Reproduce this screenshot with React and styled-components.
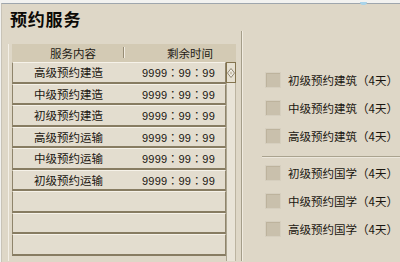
import React from 'react';
import styled, { createGlobalStyle } from 'styled-components';

const GlobalStyle = createGlobalStyle`
  html, body {
    margin: 0;
    padding: 0;
    background: #f2f2f0;
  }
  body {
    width: 400px;
    height: 262px;
    overflow: hidden;
    font-family: "Noto Sans CJK SC", "Liberation Sans", sans-serif;
    color: #1e1b16;
  }
`;

const Window = styled.div`
  position: relative;
  margin: 3px 0 0 1px;
  height: 259px;
  box-sizing: border-box;
  background: #ded7c7;
  border-top: 1px solid #9ea6ad;
  border-left: 1px solid #c8c3b7;
  display: flex;
  flex-direction: column;
`;

const TopGlint = styled.div`
  position: absolute;
  top: -2px;
  left: 358px;
  width: 7px;
  height: 3px;
  border-radius: 0 0 3px 3px;
  background: #a9d4ea;
`;

const Title = styled.h1`
  margin: 5px 0 0 8px;
  font-size: 17px;
  line-height: 20px;
  font-weight: 700;
  color: #0c0a06;
  letter-spacing: 0.8px;
`;

const Body = styled.div`
  flex: 1;
  margin-top: 2px;
  display: flex;
`;

const ListFrame = styled.section`
  margin: 13px 0 1px 6px;
  padding-left: 3px;
  border-left: 1px solid #f3efe6;
  width: 224px;
  display: flex;
  flex-direction: column;
`;

const Header = styled.div`
  height: 18px;
  background: #d3cab4;
  display: grid;
  grid-template-columns: 112px 1fr;
  font-size: 11.5px;
  line-height: 18px;
  color: #1f1b14;
`;

const HeaderCell = styled.div`
  position: relative;
  padding-left: ${p => p.$indent}px;
  ${p => p.$split && `
    &::after {
      content: '';
      position: absolute;
      right: 0;
      top: 3px;
      width: 1px;
      height: 11px;
      background: #978d76;
      box-shadow: 1px 0 0 #f1ece1;
    }
  `}
`;

const RowsArea = styled.div`
  flex: 1;
  display: flex;
`;

const Rows = styled.div`
  width: 214px;
  display: grid;
  grid-auto-rows: 21.5px;
`;

const Row = styled.div`
  box-sizing: border-box;
  background: #e3ddcf;
  border-top: 1px solid #f6f2e9;
  border-left: 1px solid #8f846b;
  border-right: 1px solid #8f846b;
  border-bottom: 2px solid #877c62;
  display: flex;
  align-items: center;
  justify-content: space-between;
  padding: 0 10px 0 21px;
  font-size: 11.5px;
  color: #1a1610;
`;

const Timer = styled.span`
  font-family: "Liberation Sans", "Noto Sans CJK TC", sans-serif;
  font-size: 11px;
  letter-spacing: 0.2px;
`;

const Track = styled.div`
  width: 10px;
  box-sizing: border-box;
  background: #e9e4d8;
  border-left: 1px solid #aca590;
  border-right: 1px solid #bcb4a1;
  display: flex;
  flex-direction: column;
`;

const Thumb = styled.div`
  height: 21px;
  box-sizing: border-box;
  margin-left: -1px;
  width: 10px;
  border: 1px solid #84744f;
  background: #e6e0d1;
  display: flex;
  align-items: center;
  justify-content: center;
`;

const Divider = styled.div`
  margin-left: 5px;
  width: 1px;
  margin-bottom: 1px;
  background: #a49d89;
  border-right: 1px solid #f1ece1;
`;

const Options = styled.section`
  flex: 1;
  padding-top: 35px;
  display: flex;
  flex-direction: column;
`;

const Option = styled.label`
  height: 28px;
  display: flex;
  align-items: center;
  gap: 7px;
  padding-left: 22px;
  font-size: 11.5px;
  color: #1a1610;
  white-space: nowrap;
`;

const Paren = styled.span`
  font-family: "Noto Sans CJK TC", sans-serif;
`;

const Box = styled.span`
  width: 16px;
  height: 16px;
  box-sizing: border-box;
  background: #c9c0ac;
  border: 1px solid #d6cfbf;
  box-shadow: inset 1px 1px 0 #bdb39d;
`;

const GroupRule = styled.div`
  margin: 6px 0 2px 19px;
  height: 1px;
  background: #aaa38f;
  box-shadow: 0 1px 0 #ece7dc;
`;

const services = [
  '高级预约建造',
  '中级预约建造',
  '初级预约建造',
  '高级预约运输',
  '中级预约运输',
  '初级预约运输',
];

const buildOptions = ['初级预约建筑', '中级预约建筑', '高级预约建筑'];
const studyOptions = ['初级预约国学', '中级预约国学', '高级预约国学'];

const Diamond = () => (
  <svg width="8" height="10" viewBox="0 0 8 10">
    <path d="M4 0.5 L7.5 5 L4 9.5 L0.5 5 Z" fill="#f4f1ea" stroke="#8e8470" strokeWidth="1" />
    <path d="M4 3 L5.6 5 L4 7 L2.4 5 Z" fill="#c9c0ac" />
  </svg>
);

const OptionItem = ({ name }) => (
  <Option>
    <Box />
    <span>
      {name}
      <Paren>（</Paren>4天<Paren>）</Paren>
    </span>
  </Option>
);

export default function App() {
  const rows = [...services, '', '', ''];
  return (
    <>
      <GlobalStyle />
      <Window>
        <TopGlint />
        <Title>预约服务</Title>
        <Body>
          <ListFrame>
            <Header>
              <HeaderCell $indent={38} $split>服务内容</HeaderCell>
              <HeaderCell $indent={43}>剩余时间</HeaderCell>
            </Header>
            <RowsArea>
              <Rows>
                {rows.map((name, i) => (
                  <Row key={i}>
                    <span>{name}</span>
                    {name && <Timer>9999：99：99</Timer>}
                  </Row>
                ))}
              </Rows>
              <Track>
                <Thumb>
                  <Diamond />
                </Thumb>
              </Track>
            </RowsArea>
          </ListFrame>
          <Divider />
          <Options>
            {buildOptions.map(o => (
              <OptionItem key={o} name={o} />
            ))}
            <GroupRule />
            {studyOptions.map(o => (
              <OptionItem key={o} name={o} />
            ))}
          </Options>
        </Body>
      </Window>
    </>
  );
}
